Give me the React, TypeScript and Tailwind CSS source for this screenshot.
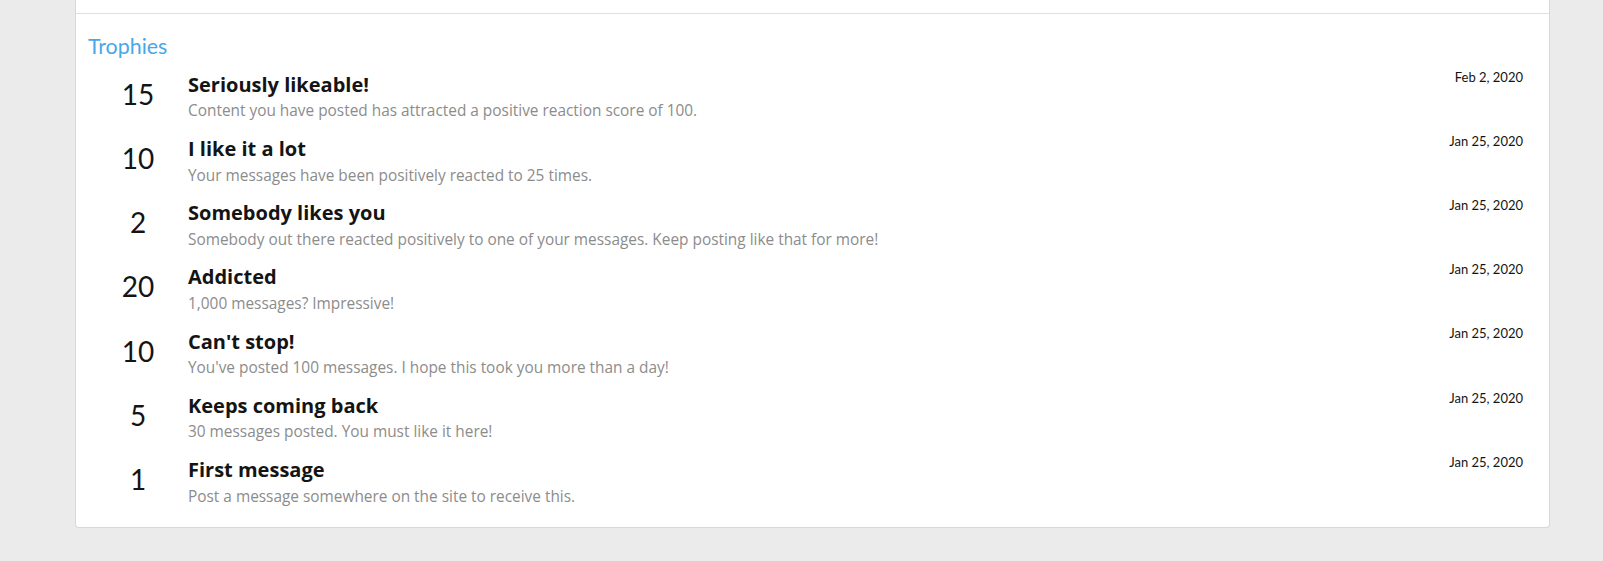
const trophies = [
  {
    points: 15,
    title: 'Seriously likeable!',
    desc: 'Content you have posted has attracted a positive reaction score of 100.',
    date: 'Feb 2, 2020',
  },
  {
    points: 10,
    title: 'I like it a lot',
    desc: 'Your messages have been positively reacted to 25 times.',
    date: 'Jan 25, 2020',
  },
  {
    points: 2,
    title: 'Somebody likes you',
    desc: 'Somebody out there reacted positively to one of your messages. Keep posting like that for more!',
    date: 'Jan 25, 2020',
  },
  {
    points: 20,
    title: 'Addicted',
    desc: '1,000 messages? Impressive!',
    date: 'Jan 25, 2020',
  },
  {
    points: 10,
    title: "Can't stop!",
    desc: "You've posted 100 messages. I hope this took you more than a day!",
    date: 'Jan 25, 2020',
  },
  {
    points: 5,
    title: 'Keeps coming back',
    desc: '30 messages posted. You must like it here!',
    date: 'Jan 25, 2020',
  },
  {
    points: 1,
    title: 'First message',
    desc: 'Post a message somewhere on the site to receive this.',
    date: 'Jan 25, 2020',
  },
];

const App = () => {
  return (
    <div className="h-screen w-full overflow-hidden bg-[#ebebeb] font-['Lato',sans-serif] text-[#141414]">
      <div className="ml-[75px] w-[1475px] rounded-b-[4px] border-x border-b border-[#d8d8d8] bg-white">
        <div className="h-[14px] border-b border-[#dfdfdf]" />
        <h3 className="pl-[12px] pt-[20px] text-[21.4px] font-normal leading-[24px] text-[#47a7eb]">
          Trophies
        </h3>
        <ol className="pt-[10.7px] pb-[9px] pl-[12px] pr-[26px]">
          {trophies.map((t, i) => (
            <li key={i} className="flex h-[64.2px] items-start">
              <div className="w-[100px] self-center pb-[14px] text-center text-[28px] leading-[32px]">
                {t.points}
              </div>
              <div className="flex-1 pt-[4.2px] font-['Open_Sans',sans-serif]">
                <h4 className="text-[20px] font-bold leading-[24px]">{t.title}</h4>
                <p className="mt-[4.5px] text-[15.4px] leading-[20px] text-[#8c8c8c]">{t.desc}</p>
              </div>
              <time className="text-[13px] leading-[16px]">{t.date}</time>
            </li>
          ))}
        </ol>
      </div>
    </div>
  );
};

export default App;
